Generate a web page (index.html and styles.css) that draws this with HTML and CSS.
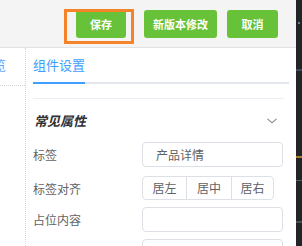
FILE: index.html
```html
<!DOCTYPE html>
<html lang="zh">
<head>
<meta charset="utf-8">
<link rel="stylesheet" href="styles.css">
</head>
<body>
<div class="main">
  <div class="header">
    <button class="btn btn-save">保存</button>
    <button class="btn btn-version">新版本修改</button>
    <button class="btn btn-cancel">取消</button>
    <div class="highlight"></div>
  </div>
  <div class="body">
    <div class="left">
      <div class="left-tab"><span class="left-text">预览</span></div>
    </div>
    <div class="panel">
      <div class="tabs">
        <div class="tab active">组件设置</div>
      </div>
      <div class="collapse">
        <div class="collapse-head">
          <span class="collapse-title">常见属性</span>
          <svg class="chevron" width="10" height="6" viewBox="0 0 10 6"><path d="M0.5 0.8 L5 4.8 L9.5 0.8" fill="none" stroke="#7d8694" stroke-width="1.1"/></svg>
        </div>
        <div class="row row1">
          <div class="label">标签</div>
          <div class="input">产品详情</div>
        </div>
        <div class="row row2">
          <div class="label">标签对齐</div>
          <div class="group">
            <div class="seg seg1">居左</div>
            <div class="seg seg2">居中</div>
            <div class="seg seg3">居右</div>
          </div>
        </div>
        <div class="row row3">
          <div class="label">占位内容</div>
          <div class="input"></div>
        </div>
        <div class="row row4">
          <div class="label">默认内容</div>
          <div class="input"></div>
        </div>
      </div>
    </div>
  </div>
</div>
<div class="strip">
  <i class="mark m1"></i>
  <i class="mark m2"></i>
  <i class="mark m3"></i>
  <i class="mark m4"></i>
  <i class="mark m5"></i>
</div>
</body>
</html>
```

FILE: styles.css
```css
* { box-sizing: border-box; }
html, body { margin: 0; padding: 0; }
body {
  width: 302px;
  height: 246px;
  overflow: hidden;
  display: flex;
  background: #fff;
  font-family: "Noto Sans CJK SC", "Noto Sans", sans-serif;
}
.main {
  width: 296px;
  height: 246px;
  display: flex;
  flex-direction: column;
  overflow: hidden;
}
.header {
  position: relative;
  height: 48px;
  flex: none;
  background: #f4f4f4;
  border-bottom: 1px solid #e2e2e2;
  display: flex;
  align-items: flex-start;
  padding: 10px 0 0 76px;
}
.btn {
  height: 28px;
  border: none;
  border-radius: 3px;
  background: #67c23a;
  color: #fff;
  font-family: inherit;
  font-size: 11px;
  font-weight: bold;
  padding: 0;
  line-height: 28px;
}
.btn-save { width: 50px; margin-right: 18px; }
.btn-version { width: 73px; margin-right: 10px; }
.btn-cancel { width: 51px; }
.highlight {
  position: absolute;
  left: 64px;
  top: 9px;
  width: 70px;
  height: 35px;
  border: 3px solid #f5832a;
}
.body {
  flex: 1;
  display: flex;
  min-height: 0;
}
.left {
  width: 26px;
  flex: none;
  border-right: 1px dotted #d6d6d6;
  overflow: hidden;
}
.left-tab {
  height: 38px;
  border-bottom: 1px dotted #d6d6d6;
  white-space: nowrap;
  overflow: hidden;
}
.left-text {
  display: block;
  margin-left: -20px;
  padding-top: 8px;
  font-size: 13px;
  line-height: 18px;
  color: #5aa6ff;
}
.panel {
  flex: 1;
  padding: 0 7px 0 7px;
  min-width: 0;
}
.tabs {
  position: relative;
  height: 36px;
  border-bottom: 2px solid #e4e7ed;
  display: flex;
}
.tab {
  font-size: 13px;
  line-height: 34px;
  height: 36px;
  color: #409eff;
  margin-bottom: -2px;
}
.tab.active { border-bottom: 2px solid #409eff; }
.collapse {
  margin-top: 14px;
  margin-right: 5px;
  border-top: 1px solid #ebeef5;
}
.collapse-head {
  height: 42px;
  display: flex;
  align-items: center;
  justify-content: space-between;
}
.collapse-title {
  font-size: 13px;
  font-weight: bold;
  font-style: italic;
  color: #303133;
  padding-left: 1px;
}
.chevron { margin-right: 7px; margin-top: 1px; }
.row {
  display: flex;
  align-items: center;
}
.row1 { margin-top: 1px; margin-bottom: 9px; }
.row2 { margin-bottom: 7px; }
.row3 { margin-bottom: 7px; }
.label {
  width: 109px;
  flex: none;
  font-size: 12px;
  color: #606266;
  white-space: nowrap;
}
.input {
  width: 141px;
  height: 25px;
  border: 1px solid #dcdfe6;
  border-radius: 4px;
  padding-left: 13px;
  font-size: 12px;
  line-height: 23px;
  color: #606266;
}
.group {
  display: flex;
  height: 24px;
  width: 132px;
  border: 1px solid #dcdfe6;
  border-radius: 4px;
}
.seg {
  font-size: 12px;
  line-height: 22px;
  text-align: center;
  color: #606266;
}
.seg1 { width: 43px; }
.seg2 { width: 45px; border-left: 1px solid #dcdfe6; }
.seg3 { flex: 1; border-left: 1px solid #dcdfe6; }
.strip {
  width: 6px;
  height: 246px;
  flex: none;
  background: #232425;
  display: flex;
  flex-direction: column;
}
.mark { display: block; height: 1px; }
.m1 { margin-top: 22px; height: 2px; background: #6a7a9a; margin-left: 2px; width: 2px; }
.m2 { margin-top: 45px; height: 2px; background: #3b4a5a; }
.m3 { margin-top: 85px; height: 2px; background: #b07a30; }
.m4 { margin-top: 22px; height: 1px; background: #555a60; }
.m5 { margin-top: 40px; height: 2px; background: #4a4f55; }
```
